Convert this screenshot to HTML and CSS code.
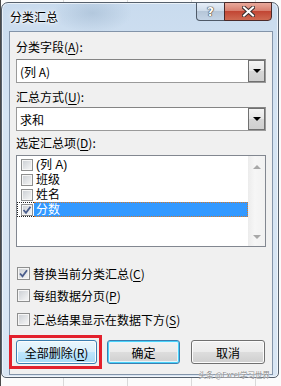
FILE: index.html
```html
<!DOCTYPE html>
<html lang="zh-CN">
<head>
    <meta charset="UTF-8">
    <meta name="viewport" content="width=device-width, initial-scale=1.0">
    <title>分类汇总</title>
    <link rel="stylesheet" href="styles.css">
</head>
<body>

<div class="desk">
    <div class="window">

        <!-- Title bar -->
        <div class="titlebar">
            <span class="title">分类汇总</span>
            <div class="caption-btns">
                <span class="cap help">?</span>
                <span class="cap close">
                    <svg width="13" height="11" viewBox="0 0 13 11">
                        <path d="M2 1.5 L11 9.5 M11 1.5 L2 9.5" stroke="#3b3030" stroke-width="4" stroke-linecap="square" fill="none"/>
                        <path d="M2 1.5 L11 9.5 M11 1.5 L2 9.5" stroke="#fff" stroke-width="2" stroke-linecap="square" fill="none"/>
                    </svg>
                </span>
            </div>
        </div>

        <!-- Dialog body -->
        <div class="client">
            <div class="lbl first">分类字段(<u>A</u>):</div>
            <div class="combo">
                <span class="combo-text">(列 A)</span>
                <span class="drop"><span class="tri"></span></span>
            </div>

            <div class="lbl second">汇总方式(<u>U</u>):</div>
            <div class="combo">
                <span class="combo-text">求和</span>
                <span class="drop"><span class="tri"></span></span>
            </div>

            <div class="lbl third">选定汇总项(<u>D</u>):</div>
            <div class="list">
                <div class="list-items">
                    <div class="item"><span class="cb small"></span><span class="item-text">(列 A)</span></div>
                    <div class="item"><span class="cb small"></span><span class="item-text">班级</span></div>
                    <div class="item"><span class="cb small"></span><span class="item-text">姓名</span></div>
                    <div class="item sel">
                        <span class="cb small">
                            <svg width="10" height="10" viewBox="0 0 10 10"><path d="M1.5 5 L4 7.8 L8.5 1.8" stroke="#4a5d8c" stroke-width="1.8" fill="none"/></svg>
                        </span>
                        <span class="item-text">分数</span>
                    </div>
                </div>
                <div class="vscroll">
                    <span class="arrow up"></span>
                    <span class="arrow down"></span>
                </div>
            </div>

            <!-- Options -->
            <div class="opt opt-1">
                <span class="cb">
                    <svg width="11" height="11" viewBox="0 0 11 11"><path d="M2 5.5 L4.5 8.3 L9 2.3" stroke="#4a5d8c" stroke-width="1.8" fill="none"/></svg>
                </span>
                <span class="opt-text">替换当前分类汇总(<u>C</u>)</span>
            </div>
            <div class="opt opt-2"><span class="cb"></span><span class="opt-text">每组数据分页(<u>P</u>)</span></div>
            <div class="opt opt-3"><span class="cb"></span><span class="opt-text">汇总结果显示在数据下方(<u>S</u>)</span></div>

            <!-- Buttons -->
            <div class="buttons">
                <div class="mark"><button class="btn hot btn-wide">全部删除(<u>R</u>)</button></div>
                <button class="btn default btn-ok">确定</button>
                <button class="btn btn-cancel">取消</button>
            </div>
        </div>

        <span class="watermark">头条 @Excel学习世界</span>
    </div>
</div>

</body>
</html>
```

FILE: styles.css
```css
body {
    margin: 0;
    background: #f4f4f4;
    font-family: "Noto Sans CJK SC", "Noto Sans", sans-serif;
    font-size: 12px;
    color: #000;
}

.desk {
    width: 281px;
    height: 386px;
    overflow: hidden;
    background:
        linear-gradient(to right, #4a4a4a 0 1px, transparent 1px),
        repeating-linear-gradient(to right, transparent 0 63px, #d9d9d9 63px 64px),
        #fbfbfb;
}

/* Aero glass frame */
.window {
    position: relative;
    box-sizing: border-box;
    width: 278px;
    height: 376px;
    margin: 2px 0 0 1px;
    padding: 0 5px 2px 7px;
    display: flex;
    flex-direction: column;
    border: 1px solid #56606c;
    border-radius: 7px 7px 5px 5px;
    background:
        radial-gradient(ellipse 40px 20px at 90px 10px, rgba(150, 175, 200, 0.45), transparent),
        linear-gradient(to bottom, #c9dbee, #d5e4f3 30%, #d9e6f4);
    box-shadow: inset 0 0 0 1px rgba(255, 255, 255, 0.6);
}

.titlebar {
    height: 28px;
    display: flex;
    align-items: flex-start;
}

.title {
    margin: 6px 0 0 1px;
    line-height: 16px;
    font-size: 12px;
    text-shadow: 0 0 6px #fff, 0 0 3px #fff, 0 0 2px #fff;
}

.caption-btns {
    margin: -1px 1px 0 auto;
    display: flex;
}

.cap {
    box-sizing: border-box;
    height: 19px;
    display: flex;
    align-items: center;
    justify-content: center;
    border: 1px solid #4f5a68;
    border-top-color: #5c6673;
}

.help {
    width: 29px;
    margin-right: -1px;
    border-radius: 0 0 0 4px;
    background: linear-gradient(to bottom, #e6eef8, #cfdcea 45%, #b6c6d8 50%, #c4d4e6);
    color: #fff;
    font-family: "DejaVu Sans", sans-serif;
    font-weight: bold;
    font-size: 12px;
    text-shadow: 0 0 1px #333, 0 0 1px #333, 0 0 1px #333;
}

.close {
    width: 48px;
    border-color: #4a2a2a;
    border-radius: 0 0 4px 0;
    background: linear-gradient(to bottom, #e9a99b, #d88070 45%, #c24634 50%, #cf6a52);
}

/* Client area */
.client {
    flex: 1;
    border: 1px solid #8394a9;
    background: #f0f0f0;
    padding: 0 6px;
    display: flex;
    flex-direction: column;
}

.lbl {
    line-height: 16px;
}

.lbl.first { margin: 7px 0 4px; }
.lbl.second { margin: 6px 0 2px; }
.lbl.third { margin: 4px 0 4px; }

u {
    text-decoration-thickness: 1px;
    text-underline-offset: 2px;
}

.combo {
    box-sizing: border-box;
    height: 24px;
    display: flex;
    align-items: center;
    background: #fff;
    border: 1px solid #9a9a9a;
    border-top-color: #848484;
    padding: 0 0 0 3px;
}

.combo-text {
    flex: 1;
}

.drop {
    box-sizing: border-box;
    width: 17px;
    height: 22px;
    display: flex;
    align-items: center;
    justify-content: center;
    border: 1px solid #707070;
    background: linear-gradient(to bottom, #f4f4f4, #e6e6e6 50%, #d6d6d6 51%, #cfcfcf);
}

.tri {
    width: 0;
    height: 0;
    border-left: 4px solid transparent;
    border-right: 4px solid transparent;
    border-top: 4px solid #000;
}

/* List box with checkboxes */
.list {
    box-sizing: border-box;
    height: 92px;
    display: flex;
    background: #fff;
    border: 1px solid #828790;
}

.list-items {
    flex: 1;
    padding-top: 1px;
}

.item {
    height: 15px;
    display: flex;
    align-items: center;
    padding-left: 4px;
}

.item-text {
    display: block;
    height: 15px;
    line-height: 17px;
    padding-left: 3px;
    overflow: hidden;
    font-family: "Liberation Sans", "Noto Sans CJK SC", sans-serif;
}

.item.sel {
    box-sizing: border-box;
    padding-left: 3px;
    border: 1px dotted #222;
    border-right: none;
}

.item.sel .item-text {
    box-sizing: border-box;
    flex: 1;
    margin: -1px 0 -1px 1px;
    padding-left: 2px;
    line-height: 15px;
    background: #3399ff;
    color: #fff;
    border: 1px dotted #d77a2a;
    border-left: none;
}

.vscroll {
    width: 17px;
    display: flex;
    flex-direction: column;
    justify-content: space-between;
    align-items: center;
    padding: 9px 0 7px;
    background: linear-gradient(to right, #ececec, #f6f6f6 40%, #f1f1f1);
}

.arrow {
    width: 0;
    height: 0;
    border-left: 4px solid transparent;
    border-right: 4px solid transparent;
}

.arrow.up { border-bottom: 4px solid #a8a8a8; }
.arrow.down { border-top: 4px solid #a8a8a8; }

/* Checkboxes */
.cb {
    box-sizing: border-box;
    flex: none;
    width: 13px;
    height: 13px;
    display: inline-flex;
    align-items: center;
    justify-content: center;
    border: 1px solid #8e8f8f;
    background: linear-gradient(135deg, #c9cdd2, #eff0f1 80%);
    box-shadow: inset 0 0 0 1px #f6f6f6;
}

.cb.small {
    width: 12px;
    height: 12px;
}

.opt {
    height: 15px;
    display: flex;
    align-items: center;
    padding-left: 1px;
}

.opt .cb {
    margin-right: 3px;
}

.opt-text {
    display: block;
    line-height: 15px;
    height: 15px;
}

.opt-1 { margin-top: 19px; }
.opt-2 { margin-top: 7px; }
.opt-3 { margin-top: 9px; }

/* Buttons */
.buttons {
    display: flex;
    align-items: center;
    margin-top: 8px;
}

.mark {
    margin-left: -7px;
    padding: 2px 2px 2px 4px;
    border: 3px solid #e3202c;
    display: flex;
}

.btn {
    box-sizing: border-box;
    height: 24px;
    padding: 0;
    font-family: "Noto Sans CJK SC", "Noto Sans", sans-serif;
    font-size: 12px;
    color: #000;
    border: 1px solid #707070;
    border-radius: 3px;
    background: linear-gradient(to bottom, #f2f2f2, #ebebeb 50%, #dddddd 51%, #cfcfcf);
    box-shadow: inset 0 0 0 1px #fcfcfc;
}

.btn.hot {
    border-color: #3c7fb1;
    background: linear-gradient(to bottom, #eaf6fd, #d9f0fc 50%, #bee6fd 51%, #a7d9f5);
}

.btn.default {
    border-color: #3c7fb1;
    box-shadow: inset 0 0 0 1px #48d2fa, inset 0 0 0 2px #e4f5fc;
}

.btn-wide { width: 81px; }
.btn-ok { width: 73px; margin-left: 5px; }
.btn-cancel { width: 74px; margin-left: 11px; }

.watermark {
    position: absolute;
    right: 8px;
    bottom: -2px;
    font-size: 7.5px;
    line-height: 9px;
    color: #8a8a8a;
    text-shadow: 0 0 2px #fff, 0 0 1px #fff;
}
```
